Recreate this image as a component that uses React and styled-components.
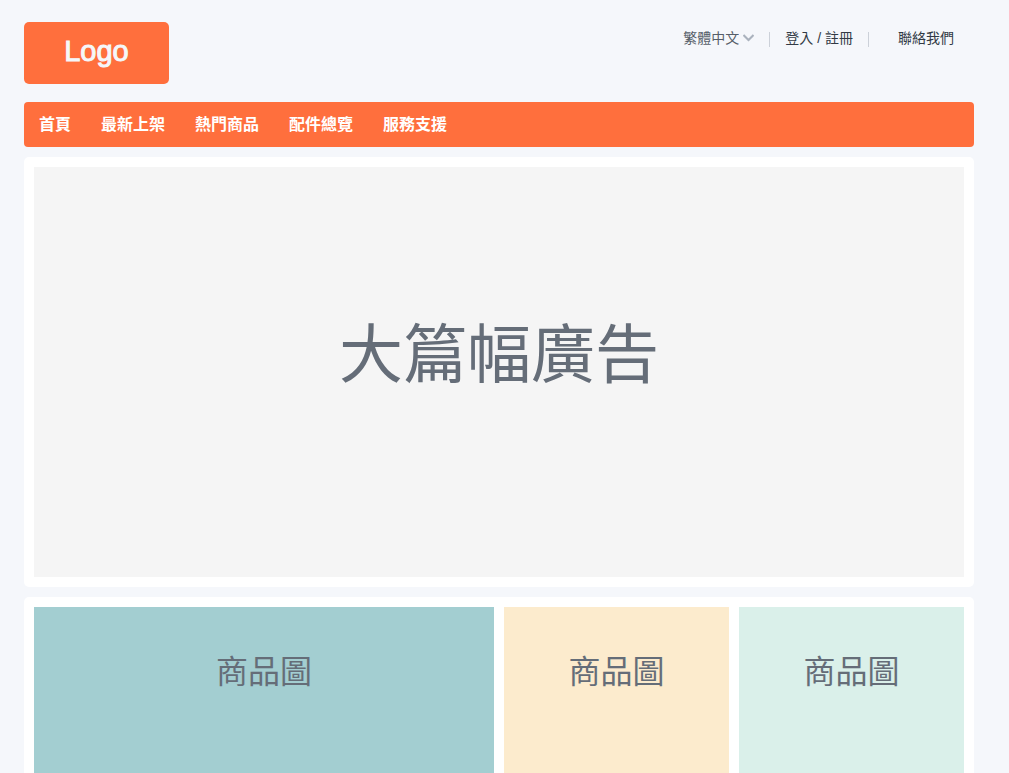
import React from "react";
import styled, { createGlobalStyle } from "styled-components";

const GlobalStyle = createGlobalStyle`
  *, *::before, *::after { box-sizing: border-box; }
  body {
    margin: 0;
    background: #f5f7fb;
    color: #656d78;
    font-family: "Liberation Sans", "Noto Sans CJK TC", sans-serif;
  }
`;

const Page = styled.div`
  display: flex;
  flex-direction: column;
  gap: 10px;
  height: 100vh;
  overflow: hidden;
  padding: 22px 35px 0 24px;
`;

const Header = styled.header`
  display: flex;
  justify-content: space-between;
  align-items: flex-start;
  flex-shrink: 0;
  margin-bottom: 8px;
`;

const Logo = styled.a`
  display: flex;
  align-items: center;
  justify-content: center;
  min-width: 145px;
  padding: 13px 40px 17px;
  border-radius: 5px;
  background: #ff6f3d;
  color: #f5f7fa;
  font-size: 29px;
  line-height: 32px;
  text-decoration: none;
  -webkit-text-stroke: 1px #f5f7fa;
`;

const Utilities = styled.div`
  display: flex;
  align-items: center;
  gap: 15px;
  padding: 6px 20px 0 0;
  font-size: 14px;
  line-height: 20px;
`;

const LanguagePicker = styled.label`
  display: flex;
  align-items: center;
  gap: 4px;
`;

const LanguageSelect = styled.select`
  appearance: none;
  margin: 0;
  padding: 0;
  border: 0;
  background: transparent;
  color: #565e69;
  font: inherit;
  cursor: pointer;
`;

const Chevron = styled.svg`
  width: 11px;
  height: 8px;
  fill: none;
  stroke: #aab2bd;
  stroke-width: 2;
`;

const Divider = styled.span`
  width: 1px;
  height: 15px;
  margin-top: 2px;
  background: #ccd1d9;
`;

const UtilityLink = styled.a`
  color: #323a45;
  text-decoration: none;
`;

const ContactLink = styled(UtilityLink)`
  padding-left: 14px;
`;

const Nav = styled.nav`
  display: flex;
  flex-shrink: 0;
  border-radius: 4px;
  background: #ff6f3d;
`;

const NavLink = styled.a`
  padding: 11px 15px 10px;
  color: #fff;
  font-size: 16px;
  font-weight: 700;
  line-height: 24px;
  text-decoration: none;
`;

const Panel = styled.section`
  display: grid;
  grid-template-columns: ${(p) => p.$columns || "1fr"};
  gap: 10px;
  flex-shrink: 0;
  padding: 10px;
  border-radius: 5px;
  background: #fff;
`;

const Banner = styled.div`
  display: flex;
  align-items: center;
  justify-content: center;
  min-height: 410px;
  padding-bottom: 34px;
  background: #f5f5f5;
  font-size: 64px;
  line-height: 72px;
`;

const ProductTile = styled.div`
  min-height: 225px;
  padding-top: 45px;
  background: ${(p) => p.$tint};
  font-size: 32px;
  line-height: 40px;
  text-align: center;
`;

const navItems = ["首頁", "最新上架", "熱門商品", "配件總覽", "服務支援"];
const tileTints = ["#a3ced1", "#fcebcd", "#daf0ea"];

export default function App() {
  return (
    <>
      <GlobalStyle />
      <Page>
        <Header>
          <Logo href="#">Logo</Logo>
          <Utilities>
            <LanguagePicker>
              <LanguageSelect aria-label="繁體中文">
                <option>繁體中文</option>
              </LanguageSelect>
              <Chevron viewBox="0 0 11 8" aria-hidden="true">
                <path d="M.5 1 5.5 6 10.5 1" />
              </Chevron>
            </LanguagePicker>
            <Divider />
            <UtilityLink href="#">登入 / 註冊</UtilityLink>
            <Divider />
            <ContactLink href="#">聯絡我們</ContactLink>
          </Utilities>
        </Header>
        <Nav>
          {navItems.map((item) => (
            <NavLink href="#" key={item}>{item}</NavLink>
          ))}
        </Nav>
        <Panel>
          <Banner>大篇幅廣告</Banner>
        </Panel>
        <Panel $columns="46fr 22.5fr 22.5fr">
          {tileTints.map((tint) => (
            <ProductTile $tint={tint} key={tint}>商品圖</ProductTile>
          ))}
        </Panel>
      </Page>
    </>
  );
}
